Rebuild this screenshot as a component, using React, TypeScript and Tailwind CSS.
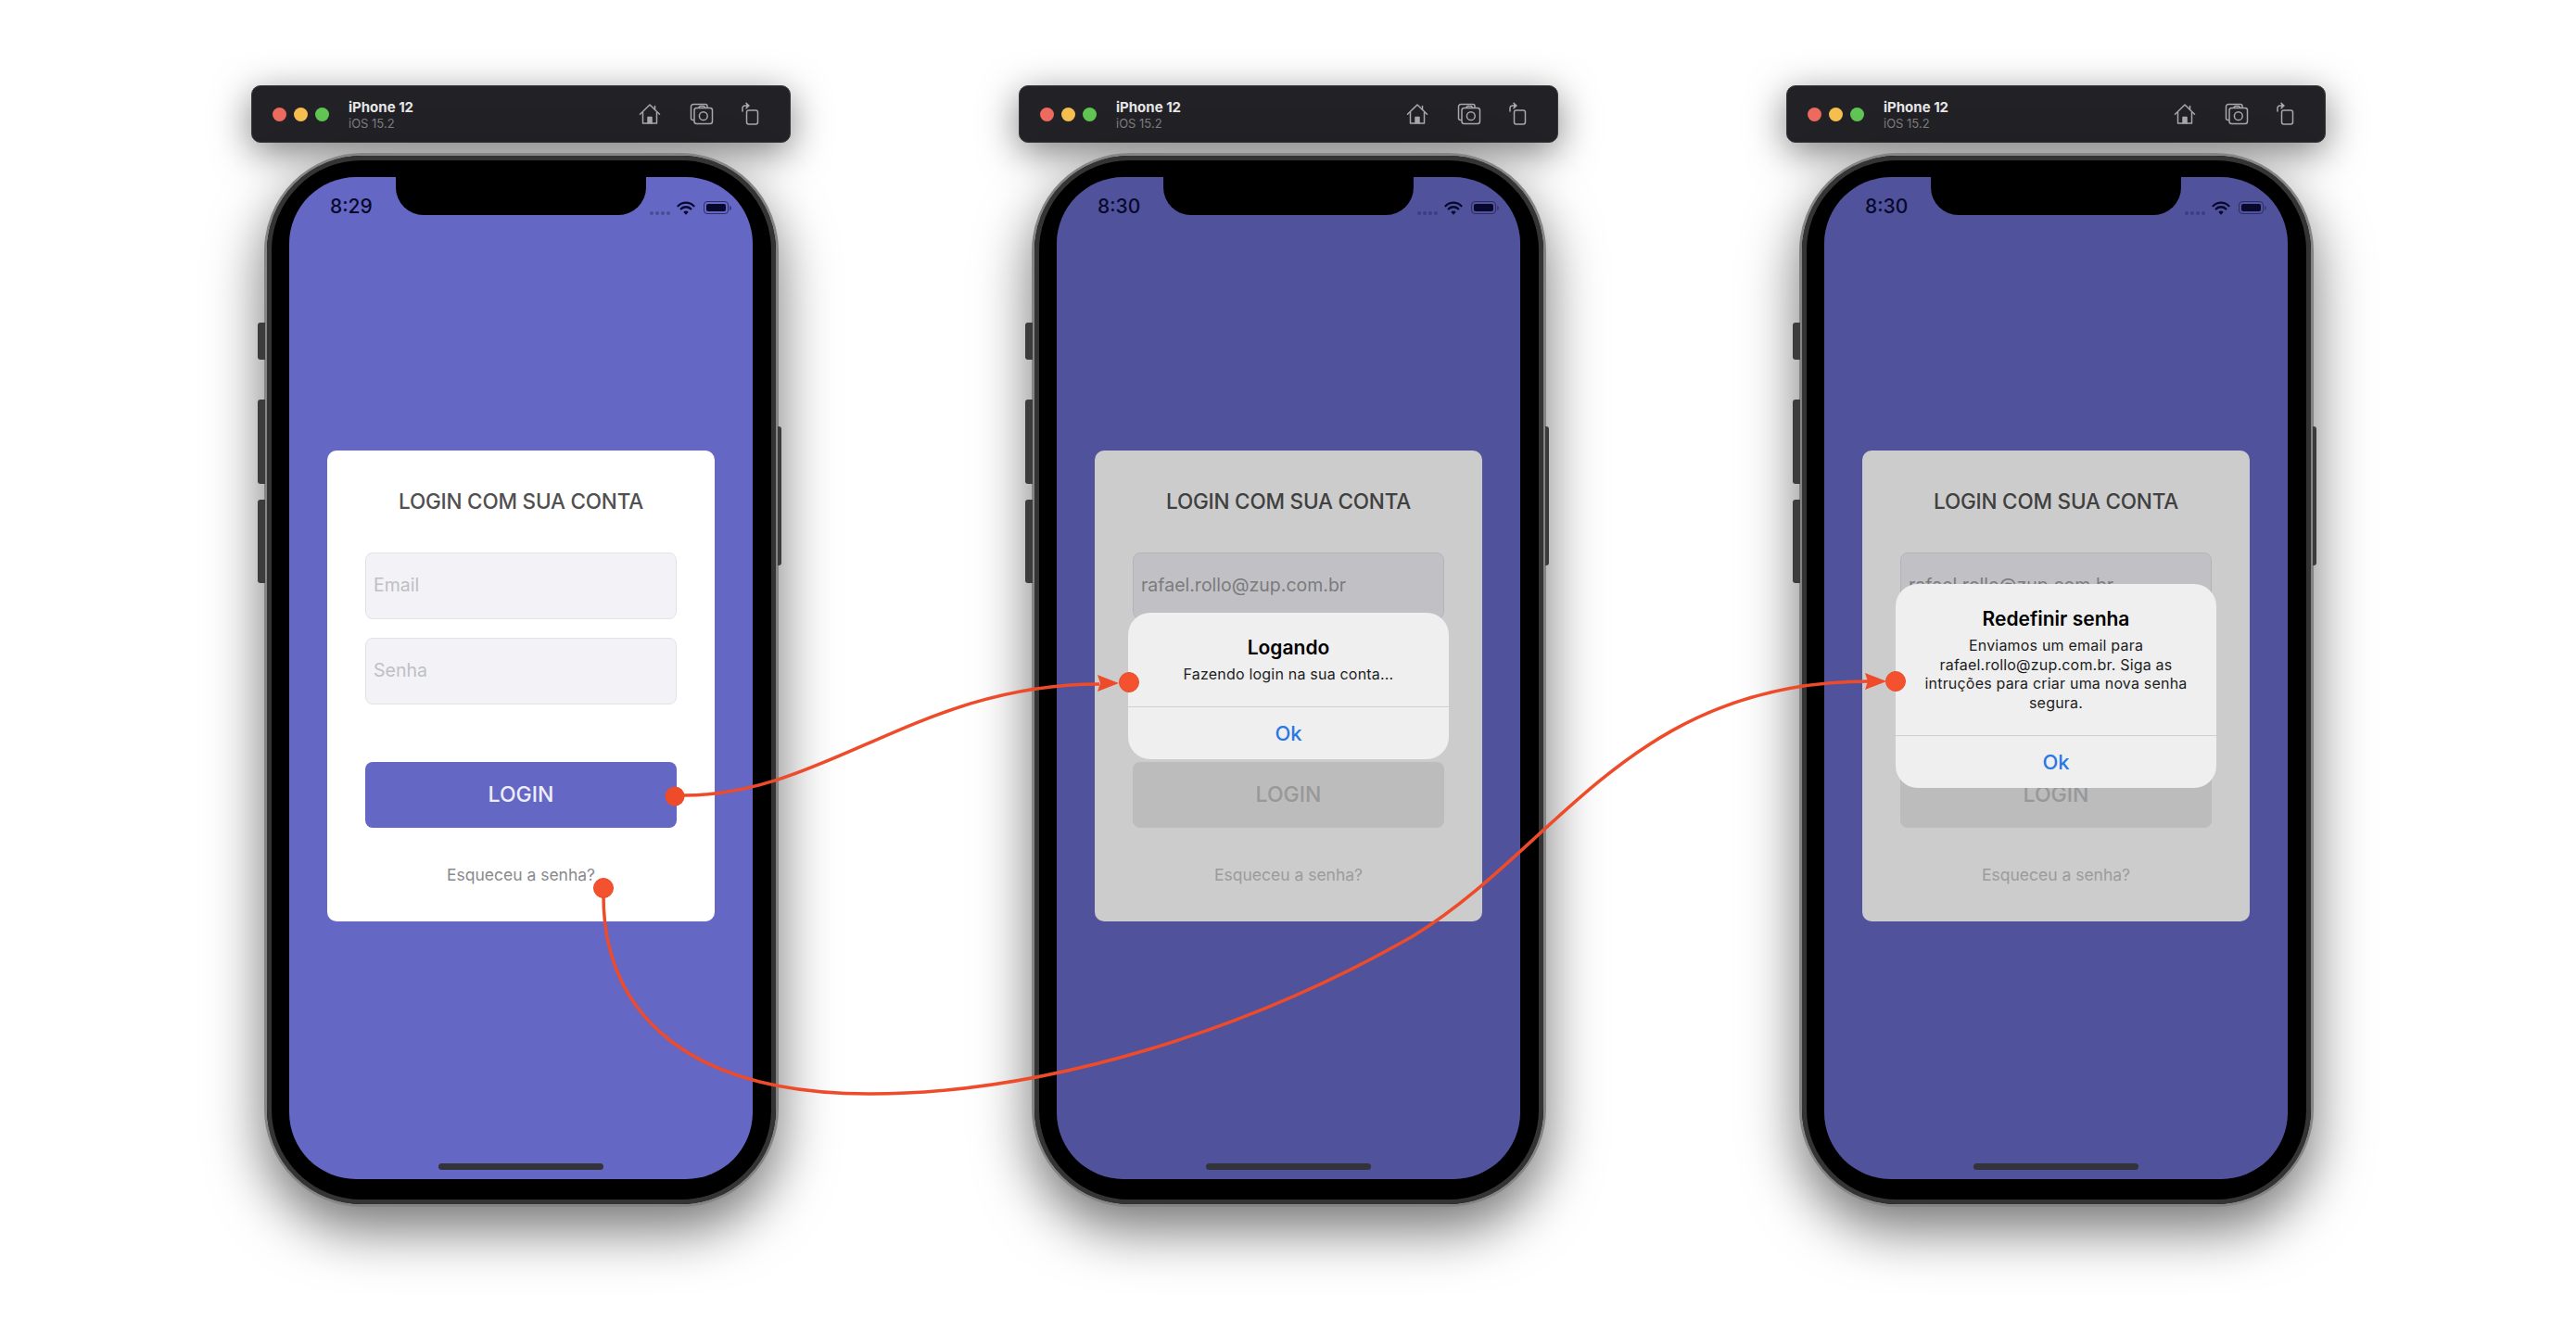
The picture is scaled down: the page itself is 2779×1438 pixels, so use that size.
import type { ReactNode } from "react";

const HomeIcon = () => (
  <svg width="24" height="24" viewBox="0 0 24 24" fill="none" stroke="#a9a9ac" strokeWidth="1.5" strokeLinejoin="round" strokeLinecap="round">
    <path d="M1.5 12.2 12 2l10.5 10.2" />
    <path d="M17.5 7V3.6" />
    <path d="M4.5 10.5V22h15V10.5" />
    <path d="M10 22v-6.5h4V22" fill="#a9a9ac" />
  </svg>
);

const CameraIcon = () => (
  <svg width="26" height="24" viewBox="0 0 26 24" fill="none" stroke="#a9a9ac" strokeWidth="1.5" strokeLinejoin="round">
    <path d="M5 18.5H3.5A2 2 0 0 1 1.5 16.5V4A2.5 2.5 0 0 1 4 1.5h13A2 2 0 0 1 19 3.5V5" />
    <rect x="5" y="5.5" width="19.5" height="17" rx="2.5" />
    <circle cx="14.8" cy="14.2" r="4.4" />
    <path d="M9.5 5.5 11 3.6h4.5L17 5.5" />
  </svg>
);

const RotateIcon = () => (
  <svg width="22" height="26" viewBox="0 0 22 26" fill="none" stroke="#a9a9ac" strokeWidth="1.5" strokeLinejoin="round" strokeLinecap="round">
    <rect x="7.5" y="9" width="12" height="15" rx="2.2" />
    <path d="M3 10V6.5A2.5 2.5 0 0 1 5.5 4H9" />
    <path d="M7 1.2 10 4 7 6.8" fill="#a9a9ac" />
  </svg>
);

const StatusIcons = ({ dimmed }: { dimmed: boolean }) => (
  <div className="flex items-center">
    <div className="flex gap-[2px] mt-[12px] mr-[7px]">
      <span className={`w-[4px] h-[4px] rounded-full ${dimmed ? "bg-[#3c3e80]" : "bg-[#4a4c97]"}`} />
      <span className={`w-[4px] h-[4px] rounded-full ${dimmed ? "bg-[#3c3e80]" : "bg-[#4a4c97]"}`} />
      <span className={`w-[4px] h-[4px] rounded-full ${dimmed ? "bg-[#3c3e80]" : "bg-[#4a4c97]"}`} />
      <span className={`w-[4px] h-[4px] rounded-full ${dimmed ? "bg-[#3c3e80]" : "bg-[#4a4c97]"}`} />
    </div>
    <svg width="20" height="15" viewBox="0 0 20 15" fill="none" stroke="#08082c" strokeWidth="2.3" strokeLinecap="round">
      <path d="M1.5 5.2a12 12 0 0 1 17 0" />
      <path d="M4.7 8.4a7.6 7.6 0 0 1 10.6 0" />
      <path d="M10 14.8 7.3 11.7a3.6 3.6 0 0 1 5.4 0Z" fill="#08082c" stroke="none" />
    </svg>
    <div className="ml-[9px] w-[27px] h-[14px] rounded-[4px] border border-[#2c2d63] p-[2px]">
      <div className="w-full h-full rounded-[2px] bg-[#08082c]" />
    </div>
    <span className="ml-[1px] w-[2px] h-[5px] rounded-r-full bg-[#3a3b78]" />
  </div>
);

const SimToolbar = () => (
  <div className="flex items-center h-[62px] rounded-[10px] bg-[#222226] border border-[#3a3a3e] pl-[22px] pr-[32px] shadow-[0_10px_40px_rgba(0,0,0,0.5)]">
    <div className="flex gap-[8px]">
      <span className="w-[15px] h-[15px] rounded-full bg-[#ec6a5e]" />
      <span className="w-[15px] h-[15px] rounded-full bg-[#f4bf4f]" />
      <span className="w-[15px] h-[15px] rounded-full bg-[#61c554]" />
    </div>
    <div className="ml-[21px] flex flex-col">
      <span className="mt-[1px] text-[15px] leading-[18px] font-bold text-[#e6e6e8]">iPhone 12</span>
      <span className="text-[13px] leading-[16px] text-[#7d7d80]">iOS 15.2</span>
    </div>
    <div className="ml-auto flex items-center">
      <HomeIcon />
      <span className="w-[31px]" />
      <CameraIcon />
      <span className="w-[28px]" />
      <RotateIcon />
    </div>
  </div>
);

const LoginCard = ({ email, dimmed }: { email?: string; dimmed: boolean }) => (
  <div className="w-[418px] h-[508px] rounded-[10px] bg-white flex flex-col px-[41px] pt-[39px]">
    <h2 className="text-center text-[22.5px] leading-[32px] font-medium text-[#505050] tracking-[-0.2px]">LOGIN COM SUA CONTA</h2>
    <div className={`mt-[39px] h-[72px] rounded-[8px] bg-[#f2f2f7] border border-[#e2e2e6] flex items-center pl-[8px] text-[19.5px] ${email ? "text-[#9a9a9e]" : "text-[#bfbfc4]"}`}>
      {email ?? "Email"}
    </div>
    {/* in the dimmed states this field sits fully behind the alert */}
    <div className="mt-[20px] h-[72px] rounded-[8px] bg-[#f2f2f7] border border-[#e2e2e6] flex items-center pl-[8px] text-[19.5px] text-[#bfbfc4]">
      {!dimmed && "Senha"}
    </div>
    <div className={`mt-[62px] h-[71px] rounded-[8px] flex items-center justify-center text-[23px] font-medium ${dimmed ? "bg-[#ebebeb] text-[#bfbfbf]" : "bg-[#6567c4] text-[#eeeef8]"}`}>
      LOGIN
    </div>
    <div className={`mt-[39px] text-center text-[17.5px] leading-[24px] ${dimmed ? "text-[#c4c4c4]" : "text-[#8a8a8e]"}`}>Esqueceu a senha?</div>
  </div>
);

const Alert = ({ title, children }: { title: string; children: ReactNode }) => (
  <div className="w-[346px] rounded-[24px] bg-[#efeff0] text-center">
    <div className="pt-[24px] pb-[25px] border-b border-[#cfcfd2]">
      <div className="text-[21px] leading-[28px] font-semibold text-black">{title}</div>
      <div className="mt-[4px] text-[16px] leading-[20.5px] text-[#1c1c1c] tracking-[0.2px]">{children}</div>
    </div>
    <div className="h-[56px] flex items-center justify-center text-[22px] font-medium text-[#2b78e4]">Ok</div>
  </div>
);

type PhoneProps = {
  time: string;
  email?: string;
  alert?: ReactNode;
};

const Phone = ({ time, email, alert }: PhoneProps) => (
  <div className="relative w-[555px] h-[1137px] mx-auto mt-[11px] rounded-[106px] bg-black border-[3px] border-[#858585] shadow-[0_24px_60px_rgba(0,0,0,0.55)]">
    {/* side buttons */}
    <span className="absolute left-[-10px] top-[180px] w-[8px] h-[40px] rounded-l-[3px] bg-[#3c3c3c]" />
    <span className="absolute left-[-10px] top-[263px] w-[8px] h-[91px] rounded-l-[3px] bg-[#3c3c3c]" />
    <span className="absolute left-[-10px] top-[371px] w-[8px] h-[90px] rounded-l-[3px] bg-[#3c3c3c]" />
    <span className="absolute right-[-6px] top-[292px] w-[4px] h-[150px] rounded-r-[3px] bg-[#3c3c3c]" />

    <div className="w-full h-full rounded-[102px] border-[5px] border-[#343434] bg-black flex items-center justify-center pb-[4px]">
      <div className="relative w-[500px] h-[1081px] rounded-[72px] bg-[#6567c4] overflow-hidden flex items-center justify-center pt-[17px]">
        <LoginCard email={email} dimmed={!!alert} />
        {alert && <div className="absolute inset-0 bg-black/20 flex items-center justify-center pt-[17px]">{alert}</div>}

        <div className="absolute left-[115px] top-0 w-[270px] h-[41px] rounded-b-[30px] bg-black" />
        <div className="absolute top-[19px] left-[44px] text-[21px] leading-[26px] font-medium text-[#08082c]">{time}</div>
        <div className="absolute top-[25px] right-[23px]">
          <StatusIcons dimmed={!!alert} />
        </div>
        <div className="absolute bottom-[10px] left-[161px] w-[178px] h-[7px] rounded-full bg-[#33333a]" />
      </div>
    </div>
  </div>
);

const Connectors = () => (
  <svg className="absolute inset-0 pointer-events-none" width="2779" height="1438" viewBox="0 0 2779 1438" fill="none">
    <path d="M738 858C890 858 990 738 1186 738" stroke="#ee4b2b" strokeWidth="3.5" />
    <path d="M1207 737 1184 728 1187 737 1184 746Z" fill="#ee4b2b" />
    <circle cx="728" cy="859" r="10.5" fill="#ee4b2b" />
    <circle cx="1218" cy="736" r="10.5" fill="#f4512e" stroke="#ec4a2a" strokeWidth="1" />

    <path d="M651 966C651 1100 750 1180 938 1180C1130 1180 1350 1110 1524 1010C1680 915 1760 735 2016 735" stroke="#ee4b2b" strokeWidth="3.5" />
    <path d="M2035 735 2012 726 2015 735 2012 744Z" fill="#ee4b2b" />
    <circle cx="651" cy="958" r="10.5" fill="#f4512e" stroke="#ec4a2a" strokeWidth="1" />
    <circle cx="2045" cy="735" r="10.5" fill="#f4512e" stroke="#ec4a2a" strokeWidth="1" />
  </svg>
);

export default function App() {
  return (
    <div className="relative w-[2779px] h-[1438px] overflow-hidden bg-white font-['Inter',sans-serif]">
      <div className="flex gap-[246px] pl-[271px] pt-[92px]">
        <div className="w-[582px]">
          <SimToolbar />
          <Phone time="8:29" />
        </div>
        <div className="w-[582px]">
          <SimToolbar />
          <Phone
            time="8:30"
            email="rafael.rollo@zup.com.br"
            alert={<Alert title="Logando">Fazendo login na sua conta...</Alert>}
          />
        </div>
        <div className="w-[582px]">
          <SimToolbar />
          <Phone
            time="8:30"
            email="rafael.rollo@zup.com.br"
            alert={
              <Alert title="Redefinir senha">
                Enviamos um email para
                <br />
                rafael.rollo@zup.com.br. Siga as
                <br />
                intruções para criar uma nova senha
                <br />
                segura.
              </Alert>
            }
          />
        </div>
      </div>
      <Connectors />
    </div>
  );
}
